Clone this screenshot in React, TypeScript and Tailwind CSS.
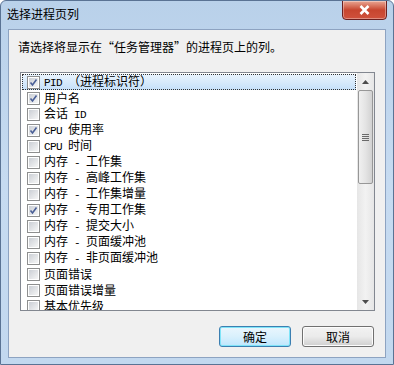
import React from 'react';

const items: { label: string; checked: boolean }[] = [
  { label: 'PID （进程标识符）', checked: true },
  { label: '用户名', checked: true },
  { label: '会话 ID', checked: false },
  { label: 'CPU 使用率', checked: true },
  { label: 'CPU 时间', checked: false },
  { label: '内存 - 工作集', checked: false },
  { label: '内存 - 高峰工作集', checked: false },
  { label: '内存 - 工作集增量', checked: false },
  { label: '内存 - 专用工作集', checked: true },
  { label: '内存 - 提交大小', checked: false },
  { label: '内存 - 页面缓冲池', checked: false },
  { label: '内存 - 非页面缓冲池', checked: false },
  { label: '页面错误', checked: false },
  { label: '页面错误增量', checked: false },
  { label: '基本优先级', checked: false },
];

// latin runs in a 6px-advance mono, like the old bitmap font
function Label({ text }: { text: string }) {
  const parts = text.split(/([\x20-\x7e]+)/).filter(Boolean);
  return (
    <span className="leading-[16px] whitespace-pre">
      {parts.map((p, i) =>
        /^[\x20-\x7e]+$/.test(p) ? (
          <span key={i} className="text-[11px] tracking-[-0.6px] font-['Liberation_Mono',monospace]">
            {p}
          </span>
        ) : (
          <span key={i}>{p}</span>
        )
      )}
    </span>
  );
}

function CheckBox({ checked }: { checked: boolean }) {
  return (
    <div className="w-[13px] h-[13px] border border-[#8e8f8f] bg-white p-[1px] shrink-0">
      <div className="w-full h-full bg-gradient-to-br from-[#cbcfd5] to-[#f6f6f6] relative">
        {checked && (
          <svg className="absolute inset-0" width="9" height="9" viewBox="0 0 9 9">
            <path d="M1.5 4.5 L3.5 7 L7.5 1.5" fill="none" stroke="#4a5f97" strokeWidth="1.6" />
          </svg>
        )}
      </div>
    </div>
  );
}

function ScrollBar() {
  return (
    <div className="w-[17px] h-full flex flex-col bg-gradient-to-r from-[#e6e6e6] via-[#f2f2f2] to-[#e6e6e6] shrink-0">
      <div className="h-[17px] flex items-center justify-center">
        <svg width="7" height="4" viewBox="0 0 7 4">
          <path d="M0 4 L3.5 0 L7 4 Z" fill="#4d4d4d" />
        </svg>
      </div>
      <div className="h-[94px] mx-[1px] rounded-[2px] border border-[#979797] bg-gradient-to-r from-[#f0f0f0] via-[#e4e4e4] to-[#d2d2d2] flex flex-col items-center justify-center gap-[1px]">
        <div className="w-[7px] h-[1px] bg-[#6a6a6a]" />
        <div className="w-[7px] h-[1px] bg-[#6a6a6a]" />
        <div className="w-[7px] h-[1px] bg-[#6a6a6a]" />
        <div className="w-[7px] h-[1px] bg-[#6a6a6a]" />
      </div>
      <div className="flex-1" />
      <div className="h-[17px] flex items-center justify-center">
        <svg width="7" height="4" viewBox="0 0 7 4">
          <path d="M0 0 L7 0 L3.5 4 Z" fill="#4d4d4d" />
        </svg>
      </div>
    </div>
  );
}

export default function App() {
  return (
    <div
      className="w-[394px] h-[365px] flex flex-col bg-gradient-to-b from-[#b9d1ea] via-[#c6dbf1] to-[#c2d8ef] border border-[#5a7394] rounded-t-[6px] overflow-hidden text-[12px] text-black"
      style={{ fontFamily: '"Noto Sans CJK SC", "Noto Sans", sans-serif' }}
    >
      {/* Title bar */}
      <div className="h-[28px] flex items-start relative shrink-0">
        <span className="pl-[6px] pt-[5px] leading-[16px]">选择进程页列</span>
        <div className="absolute right-[6px] top-[-1px] w-[45px] h-[20px] rounded-b-[4px] border border-[#6b2020] bg-gradient-to-b from-[#e8a593] via-[#c7452f] to-[#d0513c] flex items-center justify-center shadow-[inset_0_0_0_1px_rgba(255,255,255,0.35)]">
          <svg width="11" height="10" viewBox="0 0 11 10">
            <path d="M1.5 1 L9.5 9 M9.5 1 L1.5 9" stroke="#ffffff" strokeWidth="2.6" />
          </svg>
        </div>
      </div>

      {/* Client area */}
      <div className="mx-[7px] flex-1 mb-[6px] bg-[#f0f0f0] border border-[#8da3c1] flex flex-col">
        <div className="pl-[9px] pt-[9px] leading-[16px]">请选择将显示在“任务管理器”的进程页上的列。</div>

        <div className="ml-[11px] mt-[17px] w-[355px] h-[239px] border border-[#828790] bg-white flex overflow-hidden">
          <div className="flex-1 flex flex-col pt-[1px] overflow-hidden">
            {items.map((it, i) => (
              <div
                key={i}
                className={`h-[16px] shrink-0 flex items-center gap-[4px] pl-[5px] mx-[1px] ${
                  i === 0
                    ? 'bg-gradient-to-b from-[#eaf4fd] to-[#c5e0fa] outline outline-1 outline-dotted outline-[#333] -outline-offset-1'
                    : ''
                }`}
              >
                <CheckBox checked={it.checked} />
                <Label text={it.label} />
              </div>
            ))}
          </div>
          <ScrollBar />
        </div>

        <div className="flex justify-end gap-[11px] pr-[11px] mt-[15px]">
          <button className="w-[72px] h-[21px] rounded-[3px] border border-[#3c7fb1] bg-gradient-to-b from-[#eaf6fd] via-[#d9f0fc] to-[#bee6fd] shadow-[inset_0_0_0_1px_#7fe4f8] leading-[16px]">
            确定
          </button>
          <button className="w-[72px] h-[21px] rounded-[3px] border border-[#707070] bg-gradient-to-b from-[#f2f2f2] via-[#ebebeb] to-[#cfcfcf] shadow-[inset_0_0_0_1px_#fcfcfc] leading-[16px]">
            取消
          </button>
        </div>
      </div>
    </div>
  );
}
